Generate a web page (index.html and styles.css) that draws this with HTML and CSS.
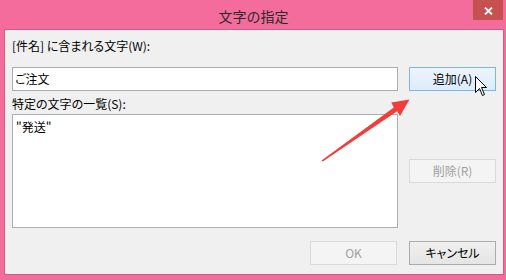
FILE: index.html
```html
<!DOCTYPE html>
<html lang="ja">
<head>
<meta charset="utf-8">
<link rel="stylesheet" href="styles.css">
</head>
<body>
<div class="window">
  <div class="titlebar">
    <div class="spacer"></div>
    <div class="title">文字の指定</div>
    <div class="close"><svg width="9" height="8" viewBox="0 0 9 8"><path d="M1 0.5 L8 7.5 M8 0.5 L1 7.5" stroke="#fff" stroke-width="1.8"/></svg></div>
  </div>
  <div class="client">
    <div class="label first">[件名] に含まれる文字(W):</div>
    <div class="row">
      <div class="input">ご注文</div>
      <div class="btn hover">追加(A)</div>
    </div>
    <div class="label second">特定の文字の一覧(S):</div>
    <div class="row">
      <div class="list">"発送"</div>
      <div class="side">
        <div class="btn disabled">削除(R)</div>
      </div>
    </div>
    <div class="footer">
      <div class="btn disabled">OK</div>
      <div class="btn normal">キャンセル</div>
    </div>
  </div>
  <svg class="arrow" width="506" height="280" viewBox="0 0 506 280">
    <polygon points="321.5,160.5 393.8,107.6 391.3,102.6 409.5,99.5 400,116 397.2,111.2 322.8,161.6" fill="#f53c3c"/>
  </svg>
  <svg class="cursor" width="13" height="21" viewBox="0 0 13 21">
    <path d="M0.5 0.5 L0.5 16.5 L4.5 12.5 L7.5 19.5 L9.5 18.5 L6.5 11.5 L11.5 11.5 Z" fill="#fff" stroke="#000" stroke-width="1" stroke-linejoin="miter"/>
  </svg>
</div>
</body>
</html>
```
FILE: styles.css
```css
* { box-sizing: border-box; }
html, body { margin: 0; padding: 0; }
body {
  width: 506px;
  height: 280px;
  overflow: hidden;
  background: #f46c9b;
  font-family: "Noto Sans CJK JP", "Noto Sans", sans-serif;
  font-size: 12px;
  font-feature-settings: "palt";
  color: #000;
}
.window {
  position: relative;
  width: 506px;
  height: 280px;
  padding: 0 2px 5px 4px;
}
.titlebar {
  height: 29px;
  display: grid;
  grid-template-columns: 1fr auto 1fr;
  padding-right: 1px;
}
.title {
  font-size: 14px;
  line-height: 14px;
  padding-top: 9px;
  color: #2a2a2a;
  font-feature-settings: normal;
}
.close {
  justify-self: end;
  width: 30px;
  height: 20px;
  background: #c75050;
  display: flex;
  align-items: center;
  justify-content: center;
  padding-top: 1px;
}
.close svg { display: block; }
.client {
  height: 246px;
  background: #f0f0f0;
  border: 1px solid #d65a86;
  padding: 8px 7px 0 7px;
  display: flex;
  flex-direction: column;
}
.label {
  line-height: 16px;
  height: 16px;
  color: #000;
}
.label.first { margin-bottom: 13px; }
.label.second { margin-top: 5px; margin-bottom: 2px; }
.row {
  display: flex;
  gap: 11px;
  align-items: flex-start;
}
.input {
  width: 386px;
  height: 24px;
  background: #fff;
  border: 1px solid #abadb3;
  padding: 0 0 0 2px;
  line-height: 22px;
}
.list {
  width: 386px;
  height: 114px;
  background: #fff;
  border: 1px solid #abadb3;
  padding: 4px 0 0 3px;
  line-height: 16px;
}
.side { padding-top: 45px; }
.btn {
  width: 87px;
  height: 24px;
  display: flex;
  align-items: center;
  justify-content: center;
  border: 1px solid #adadad;
  line-height: 16px;
}
.btn.hover {
  background: linear-gradient(#ecf4fc, #dcecfc);
  border-color: #7eb4ea;
}
.btn.disabled {
  background: #f4f4f4;
  border-color: #dadada;
  color: #a0a0a0;
}
.btn.normal {
  background: linear-gradient(#f0f0f0, #e5e5e5);
  border-color: #acacac;
}
.footer {
  margin-top: 13px;
  display: flex;
  justify-content: flex-end;
  gap: 12px;
}
.arrow {
  position: absolute;
  left: 0;
  top: 0;
  pointer-events: none;
}
.cursor {
  position: absolute;
  left: 475px;
  top: 76px;
}
```
